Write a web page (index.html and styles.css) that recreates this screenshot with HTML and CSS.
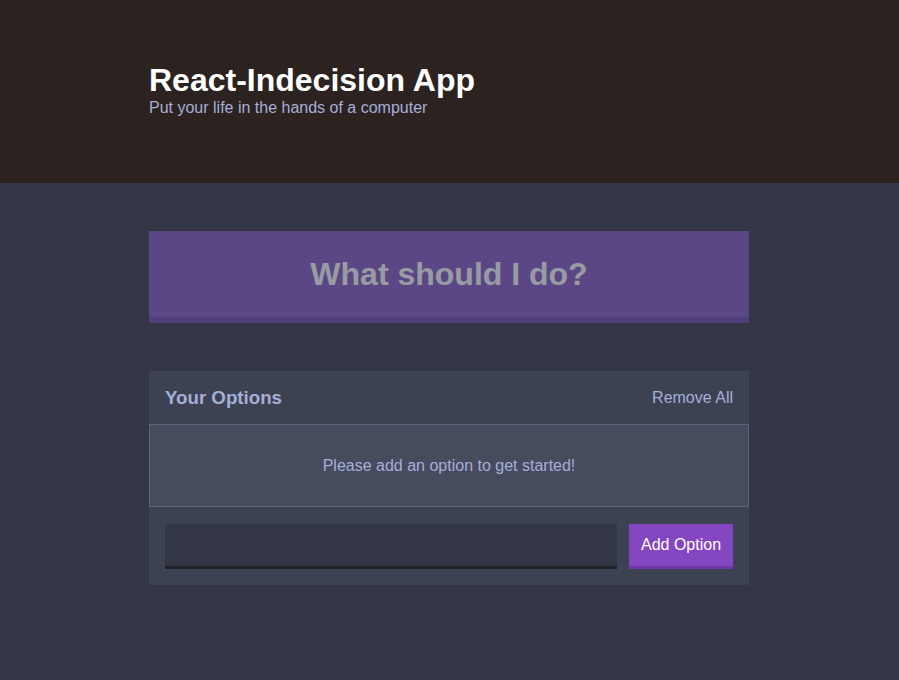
FILE: index.html
```html
<!DOCTYPE html>
<html lang="en">
<head>
<meta charset="utf-8">
<title>Indecision</title>
<link rel="stylesheet" href="styles.css">
</head>
<body>
<header class="header">
  <div class="container">
    <h1 class="header__title">React-Indecision App</h1>
    <h2 class="header__subtitle">Put your life in the hands of a computer</h2>
  </div>
</header>
<main class="container">
  <button class="big-button" disabled>What should I do?</button>
  <section class="widget">
    <div class="widget-header">
      <h3 class="widget-header__title">Your Options</h3>
      <button class="button-link">Remove All</button>
    </div>
    <p class="widget__message">Please add an option to get started!</p>
    <form class="add-option">
      <input class="add-option__input" type="text" name="option">
      <button class="button" type="button">Add Option</button>
    </form>
  </section>
</main>
</body>
</html>
```
FILE: styles.css
```css
* { box-sizing: border-box; }
html, body { margin: 0; padding: 0; }
body {
  background: #333745;
  font-family: "Liberation Sans", Arial, sans-serif;
  font-size: 16px;
  color: #fff;
  height: 680px;
}
.container {
  width: 600px;
  margin: 0 auto;
}
.header {
  background: #2c2220;
  padding: 64px 1px 67px 0;
}
main.container {
  margin: 0 calc((100% - 601px) / 2);
}
.header__title {
  margin: 0;
  font-size: 32px;
  line-height: 32px;
  font-weight: bold;
  color: #fff;
}
.header__subtitle {
  margin: 4px 0 0;
  font-size: 16px;
  line-height: 16px;
  font-weight: normal;
  color: #a5afd7;
}
.big-button {
  display: block;
  width: 100%;
  margin: 48px 0;
  padding: 0;
  height: 92px;
  background: #8357c5;
  border: none;
  border-bottom: 6px solid #6e45ac;
  color: #fff;
  font-family: "Liberation Sans", Arial, sans-serif;
  font-size: 32px;
  font-weight: bold;
  opacity: 0.5;
}
.widget {
  background: #3c4251;
}
.widget-header {
  display: flex;
  justify-content: space-between;
  align-items: center;
  height: 53px;
  padding: 0 16px;
}
.widget-header__title {
  margin: 0;
  font-size: 18.7px;
  font-weight: bold;
  color: #a5afd7;
}
.button-link {
  background: none;
  border: none;
  padding: 0;
  font-family: "Liberation Sans", Arial, sans-serif;
  font-size: 16px;
  color: #a5afd7;
}
.widget__message {
  margin: 0;
  height: 83px;
  display: flex;
  align-items: center;
  justify-content: center;
  background: #464b5e;
  border: 1px solid #5d6379;
  color: #a5afd7;
  font-size: 16px;
}
.add-option {
  display: flex;
  gap: 12px;
  padding: 17px 16px 16px;
  margin: 0;
}
.add-option__input {
  flex: 1;
  height: 45px;
  background: #333745;
  border: none;
  border-bottom: 3px solid #212329;
  margin: 0;
}
.button {
  height: 45px;
  width: 104px;
  padding: 0;
  background: #8446c1;
  border: none;
  border-bottom: 3px solid #6d37a6;
  color: #fff;
  font-family: "Liberation Sans", Arial, sans-serif;
  font-size: 16px;
}
```
